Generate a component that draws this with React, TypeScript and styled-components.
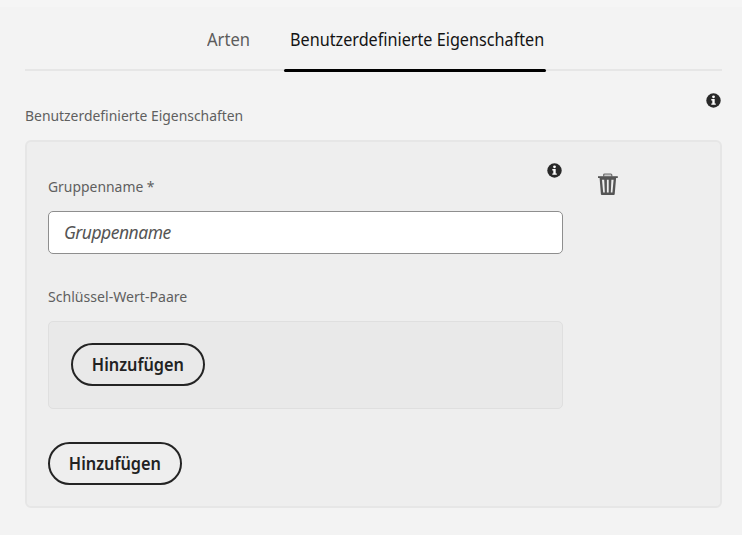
import React from "react";
import styled, { createGlobalStyle } from "styled-components";

const Global = createGlobalStyle`
  * { box-sizing: border-box; }
  body { margin: 0; background: #f3f3f3; font-family: "Noto Sans", "Open Sans", sans-serif; }
`;

const Page = styled.main`
  height: 535px;
  padding: 0 20px 0 25px;
  background: linear-gradient(#f5f5f5 0 7px, #f3f3f3 7px);
  overflow: hidden;
`;

const Narrow = styled.span<{ $scale: number; $origin?: string }>`
  display: inline-block;
  white-space: nowrap;
  transform: scaleX(${(p) => p.$scale});
  transform-origin: ${(p) => p.$origin ?? "left"} center;
`;

const Tabs = styled.nav`
  display: flex;
  height: 71px;
  padding-left: 182px;
  border-bottom: 2px solid #e6e6e6;
`;

const Tab = styled.a<{ $active?: boolean; $width: number }>`
  position: relative;
  width: ${(p) => p.$width}px;
  margin-right: 40px;
  padding-top: 27px;
  font-size: 18px;
  line-height: 24px;
  color: ${(p) => (p.$active ? "#141414" : "#5c5c5c")};

  &::after {
    content: "";
    display: ${(p) => (p.$active ? "block" : "none")};
    position: absolute;
    left: -6px;
    right: -1px;
    bottom: -3px;
    height: 3px;
    border-radius: 1.5px;
    background: #000;
  }
`;

const Label = styled.div`
  height: 20px;
  font-size: 15px;
  line-height: 20px;
  color: #5f5f5f;
`;

const SectionHead = styled.div`
  display: flex;
  justify-content: space-between;
  height: 69px;
  padding: 22px 1px 0 0;

  ${Label} { margin-top: 12px; }
`;

const Card = styled.section`
  width: 697px;
  height: 368px;
  padding: 20px 21px;
  border: 2px solid #e6e6e6;
  border-radius: 6px;
  background: #eeeeee;
`;

const FieldRow = styled.div`
  display: flex;
  gap: 33px;
`;

const Field = styled.div`
  width: 515px;
`;

const FieldHead = styled.div`
  display: flex;
  justify-content: space-between;
  height: 49px;
  padding: 1px 1px 0 0;

  ${Label} { margin-top: 13px; }
`;

const Input = styled.input`
  display: block;
  width: 515px;
  height: 43px;
  padding: 0 15px 2px;
  border: 1px solid #8e8e8e;
  border-radius: 5px;
  background: #fff;
  font: italic 17.5px "Noto Sans", "Open Sans", sans-serif;
  letter-spacing: -0.5px;

  &::placeholder { color: #555; opacity: 1; }
`;

const PairsLabel = styled(Label)`
  margin-top: 32px;
`;

const Pairs = styled.div`
  width: 515px;
  height: 88px;
  margin: 15px 0 33px;
  padding: 21px 22px;
  border: 1px solid #dfdfdf;
  border-radius: 5px;
  background: #e9e9e9;
`;

const Button = styled.button`
  display: block;
  width: 134px;
  height: 43px;
  padding: 0 0 2px;
  border: 2px solid #242424;
  border-radius: 22px;
  background: transparent;
  color: #222;
  font: 600 18px "Noto Sans", "Open Sans", sans-serif;
`;

const IconButton = styled.button`
  align-self: flex-start;
  width: 24px;
  height: 24px;
  margin-top: 10px;
  padding: 0;
  border: 0;
  background: none;
`;

const InfoSvg = styled.svg`
  display: block;
  flex: none;
  width: 15px;
  height: 15px;
`;

const Info = () => (
  <InfoSvg viewBox="0 0 15 15">
    <circle cx="7.5" cy="7.5" r="7.2" fill="#292929" />
    <circle cx="7.5" cy="3.8" r="1.4" fill="#fff" />
    <path d="M5.3 6H8.7V10.4H9.8V11.8H5.3V10.4H6.3V7.4H5.3Z" fill="#fff" />
  </InfoSvg>
);

const Trash = () => (
  <svg width="24" height="24" viewBox="0 0 24 24" fill="none">
    <path d="M7.7 4.5V3Q7.7 2 8.7 2H14.8Q15.8 2 15.8 3V4.5" fill="#c9c9c9" stroke="#6c6c6c" strokeWidth="1.2" />
    <path d="M2 4.2H21.8V6H2Z" fill="#555" />
    <path
      fillRule="evenodd"
      fill="#555"
      d="M3.6 6H20.1L18.7 22.2Q18.6 23 17.8 23H5.8Q5 23 4.9 22.2ZM6 7.8L7.2 20.5H8.8L8.2 7.8ZM10.9 7.8V20.5H12.7V7.8ZM15.4 7.8L14.8 20.5H16.4L17.6 7.8Z"
    />
  </svg>
);

const AddButton = () => (
  <Button>
    <Narrow $scale={0.905} $origin="center">Hinzufügen</Narrow>
  </Button>
);

export default function App() {
  return (
    <>
      <Global />
      <Page>
        <Tabs>
          <Tab $width={43}><Narrow $scale={0.92}>Arten</Narrow></Tab>
          <Tab $active $width={255}><Narrow $scale={0.9}>Benutzerdefinierte Eigenschaften</Narrow></Tab>
        </Tabs>
        <SectionHead>
          <Label><Narrow $scale={0.927}>Benutzerdefinierte Eigenschaften</Narrow></Label>
          <Info />
        </SectionHead>
        <Card>
          <FieldRow>
            <Field>
              <FieldHead>
                <Label><Narrow $scale={0.927}>Gruppenname *</Narrow></Label>
                <Info />
              </FieldHead>
              <Input placeholder="Gruppenname" />
            </Field>
            <IconButton aria-label="Löschen"><Trash /></IconButton>
          </FieldRow>
          <PairsLabel><Narrow $scale={0.94}>Schlüssel-Wert-Paare</Narrow></PairsLabel>
          <Pairs><AddButton /></Pairs>
          <AddButton />
        </Card>
      </Page>
    </>
  );
}
